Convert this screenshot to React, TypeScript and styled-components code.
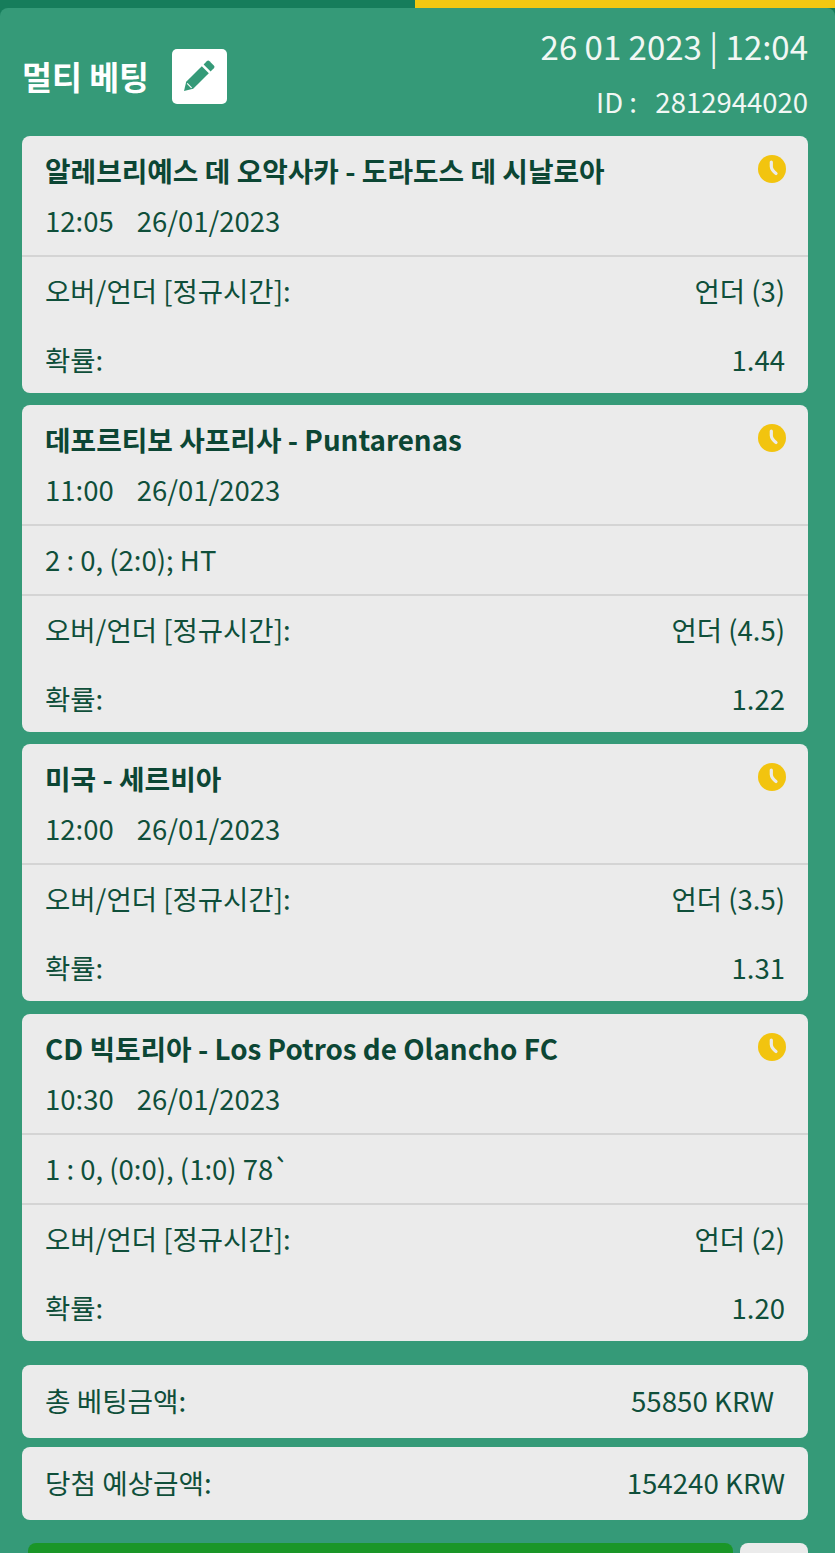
import React from "react";
import styled, { createGlobalStyle } from "styled-components";

const Global = createGlobalStyle`
  html, body { margin: 0; padding: 0; background: #359a78; }
  body { font-family: "Noto Sans CJK KR", "Noto Sans", sans-serif; overflow: hidden; }
`;
const Page = styled.div`
  width: 835px; height: 1553px; overflow: hidden; background: #167d5b;
  display: flex; flex-direction: column;
`;
const Progress = styled.div`
  height: 8px; flex: none; display: flex; background: #167d5b;
`;
const ProgressFill = styled.div`
  margin-left: 415px; flex: 1; background: #f2c811;
`;
const Panel = styled.div`
  flex: 1; background: #359a78; border-radius: 8px 8px 0 0;
  padding: 0 27px 0 22px; display: flex; flex-direction: column;
`;
const Header = styled.header`
  height: 128px; flex: none; display: flex; justify-content: space-between;
`;
const TitleGroup = styled.div`
  display: flex; align-items: center; gap: 23px; margin-top: 8px;
`;
const Title = styled.h1`
  margin: 0; color: #fff; font-size: 32.5px; font-weight: 700; line-height: 40px;
`;
const EditButton = styled.div`
  width: 55px; height: 55px; background: #fff; border-radius: 5px;
  display: flex; align-items: center; justify-content: center;
`;
const Meta = styled.div`
  display: flex; flex-direction: column; align-items: flex-end; color: #f1f7f4;
`;
const Clock = styled.div`
  font-size: 33px; line-height: 40px; margin-top: 18px; white-space: pre;
`;
const Ident = styled.div`
  font-size: 27.5px; line-height: 36px; margin-top: 17px; white-space: pre;
`;
const Card = styled.section`
  background: #ebebeb; border-radius: 8px; color: #0f4f3a; flex: none;
  margin-bottom: ${(p: { $gap: number }) => p.$gap}px;
`;
const CardHead = styled.div`
  height: 121px; box-sizing: border-box; border-bottom: 2px solid #d4d4d4;
  padding: 15px 23px 0 23px; position: relative;
`;
const Match = styled.h2`
  margin: 0; font-size: 27.8px; font-weight: 700; line-height: 38px; color: #0c4634;
  white-space: nowrap;
`;
const When = styled.div`
  font-size: 27.5px; line-height: 38px; margin-top: 12px; white-space: pre; color: #0f4f3a;
  word-spacing: 1.5px;
`;
const StatusIcon = styled.div`
  position: absolute; top: 19px; right: 22px; width: 28px; height: 28px;
`;
const Score = styled.div`
  height: 70px; box-sizing: border-box; border-bottom: 2px solid #d4d4d4;
  padding: 0 23px 2px; display: flex; align-items: center; font-size: 27.5px; white-space: pre;
`;
const Row = styled.div<{ $h: number; $pb: number }>`
  height: ${(p) => p.$h}px; box-sizing: border-box; padding: 0 23px ${(p) => p.$pb}px;
  display: flex; align-items: center; justify-content: space-between;
  font-size: 27.5px; white-space: pre;
`;
const SummaryCard = styled.div<{ $mb: number; $pr: number }>`
  height: 73px; flex: none; box-sizing: border-box; background: #ebebeb; border-radius: 8px;
  color: #0f4f3a; padding: 0 ${(p) => p.$pr}px 3px 23px; margin-bottom: ${(p) => p.$mb}px;
  display: flex; align-items: center; justify-content: space-between; font-size: 27.7px;
`;
const Actions = styled.div`
  display: flex; gap: 7px; padding-left: 6px; height: 60px; flex: none;
`;
const Confirm = styled.div`
  flex: 1; background: #1a9628; border-radius: 8px 8px 0 0;
`;
const Secondary = styled.div`
  width: 68px; background: #ebebeb; border-radius: 8px 8px 0 0;
`;

const ClockIcon = () => (
  <svg viewBox="0 0 28 28" width="28" height="28">
    <circle cx="14" cy="14" r="14" fill="#f2c40f" />
    <path d="M13.3 7 V11.5 Q13.5 15 18 18.5" fill="none" stroke="#ebebeb" strokeWidth="3.2" strokeLinecap="round" />
  </svg>
);
const PencilIcon = () => (
  <svg viewBox="0 0 32 32" width="32" height="32">
    <path fill="#359a78" d="M1 31 L3.2 21.8 L18.8 6.2 L25.8 13.2 L10.2 28.8 Z" />
    <path fill="#359a78" d="M20.6 4.4 L23.8 1.2 a2 2 0 0 1 2.8 0 L30.8 5.4 a2 2 0 0 1 0 2.8 L27.6 11.4 Z" />
    <path fill="#fff" d="M4.6 23 L9 27.4 L8.2 28.2 L3.8 23.8 Z" />
  </svg>
);

type Bet = { match: string; when: string; score?: string; pick: string; odds: string };
const bets: Bet[] = [
  { match: "알레브리예스 데 오악사카 - 도라도스 데 시날로아", when: "12:05   26/01/2023", pick: "언더 (3)", odds: "1.44" },
  { match: "데포르티보 사프리사 - Puntarenas", when: "11:00   26/01/2023", score: "2 : 0, (2:0); HT", pick: "언더 (4.5)", odds: "1.22" },
  { match: "미국 - 세르비아", when: "12:00   26/01/2023", pick: "언더 (3.5)", odds: "1.31" },
  { match: "CD 빅토리아 - Los Potros de Olancho FC", when: "10:30   26/01/2023", score: "1 : 0, (0:0), (1:0) 78`", pick: "언더 (2)", odds: "1.20" },
];
const gaps = [12, 12, 13, 24];

export default function App() {
  return (
    <Page>
      <Global />
      <Progress><ProgressFill /></Progress>
      <Panel>
        <Header>
          <TitleGroup>
            <Title>멀티 베팅</Title>
            <EditButton><PencilIcon /></EditButton>
          </TitleGroup>
          <Meta>
            <Clock>26 01 2023 | 12:04</Clock>
            <Ident>ID :   2812944020</Ident>
          </Meta>
        </Header>
        {bets.map((b, i) => (
          <Card key={b.match} $gap={gaps[i]}>
            <CardHead>
              <Match>{b.match}</Match>
              <When>{b.when}</When>
              <StatusIcon><ClockIcon /></StatusIcon>
            </CardHead>
            {b.score && <Score>{b.score}</Score>}
            <Row $h={69} $pb={3}><span>오버/언더 [정규시간]:</span><span>{b.pick}</span></Row>
            <Row $h={67} $pb={2}><span>확률:</span><span>{b.odds}</span></Row>
          </Card>
        ))}
        <SummaryCard $mb={9} $pr={34}><span>총 베팅금액:</span><span>55850 KRW</span></SummaryCard>
        <SummaryCard $mb={23} $pr={23}><span>당첨 예상금액:</span><span>154240 KRW</span></SummaryCard>
        <Actions><Confirm /><Secondary /></Actions>
      </Panel>
    </Page>
  );
}
